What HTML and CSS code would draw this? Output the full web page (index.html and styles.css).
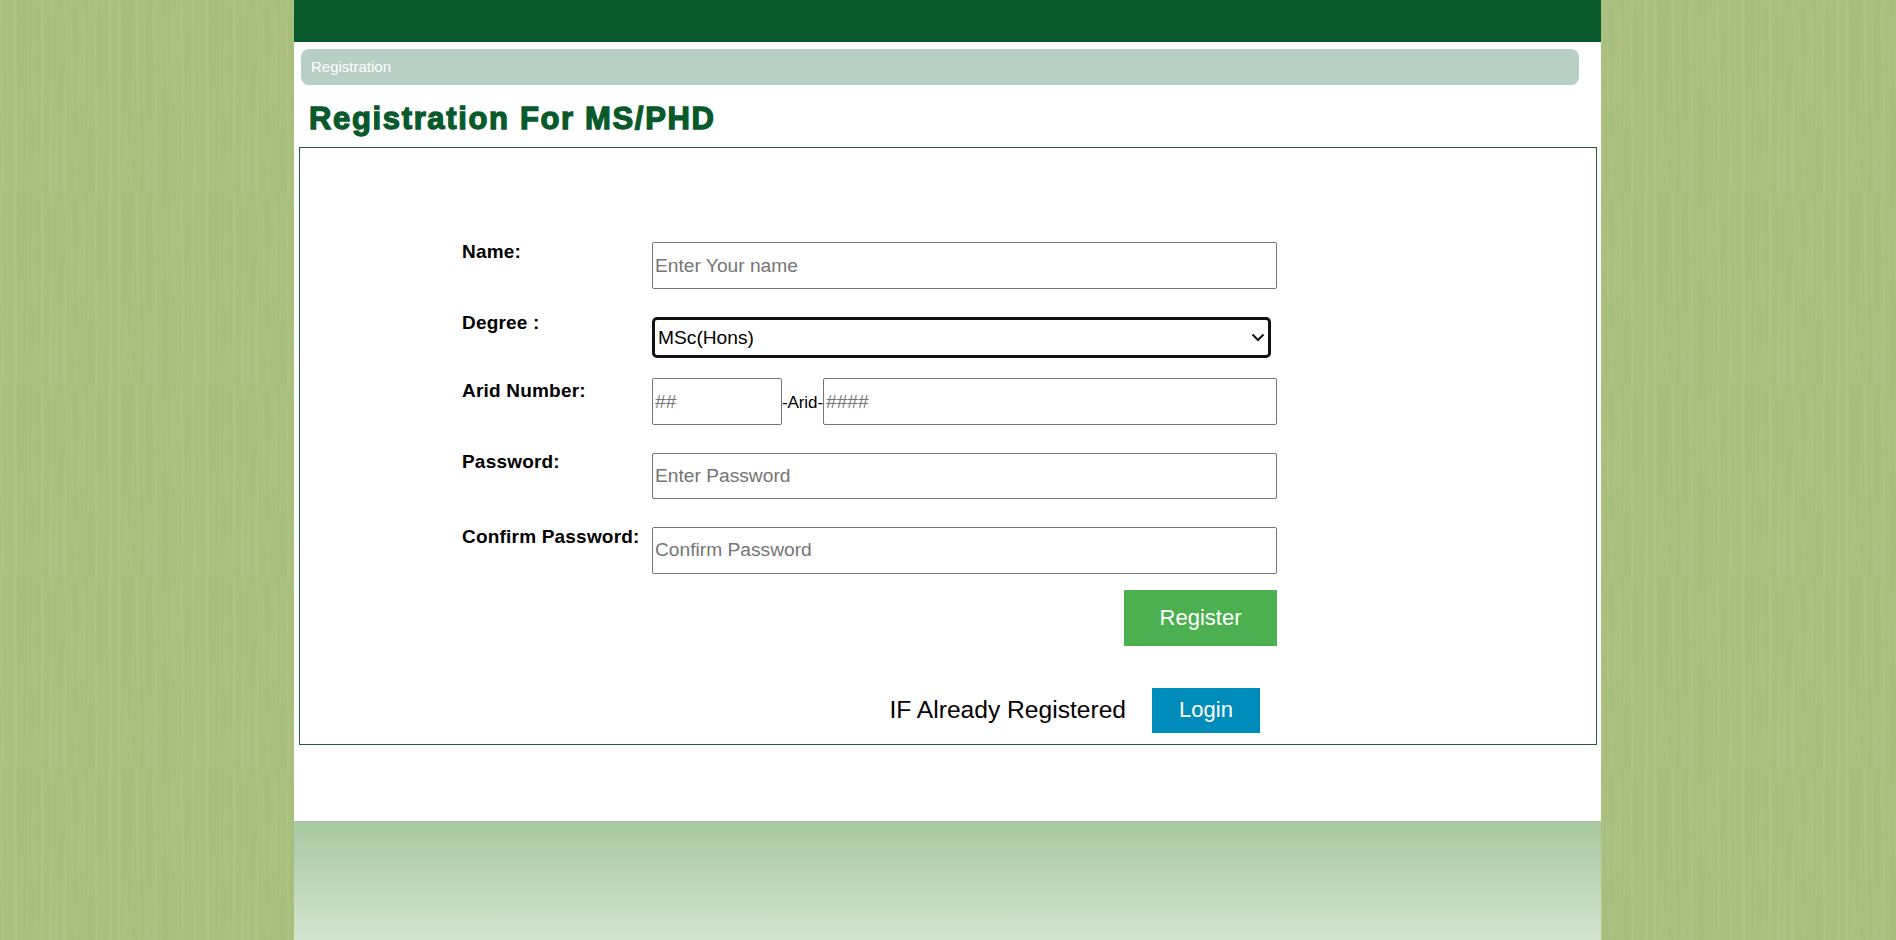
FILE: index.html
```html
<!DOCTYPE html>
<html lang="en">
<head>
<meta charset="utf-8">
<title>Registration For MS/PHD</title>
<link rel="stylesheet" href="styles.css">
</head>
<body>
<div class="page">
  <header class="topbar"></header>
  <nav class="crumb">Registration</nav>
  <h1 class="title">Registration For MS/PHD</h1>
  <main class="panel">
    <form class="form">
      <div class="row row-name">
        <label class="label">Name:</label>
        <input class="field" type="text" placeholder="Enter Your name">
      </div>
      <div class="row row-degree">
        <label class="label">Degree :</label>
        <select class="select"><option>MSc(Hons)</option><option>PhD</option></select>
      </div>
      <div class="row row-arid">
        <label class="label">Arid Number:</label>
        <div class="arid">
          <input class="field field-year" type="text" placeholder="##">
          <span class="arid-sep">-Arid-</span>
          <input class="field field-num" type="text" placeholder="####">
        </div>
      </div>
      <div class="row row-pass">
        <label class="label">Password:</label>
        <input class="field field-short" type="password" placeholder="Enter Password">
      </div>
      <div class="row row-confirm">
        <label class="label">Confirm Password:</label>
        <input class="field field-confirm" type="password" placeholder="Confirm Password">
      </div>
      <div class="actions">
        <button class="btn-register" type="button">Register</button>
      </div>
      <div class="already">
        <span class="already-text">IF Already Registered</span>
        <a class="btn-login">Login</a>
      </div>
    </form>
  </main>
  <footer class="footer"></footer>
</div>
</body>
</html>
```
FILE: styles.css
```css
html, body {
  margin: 0;
  padding: 0;
  height: 100%;
  overflow: hidden;
}
body {
  font-family: "Liberation Sans", Arial, sans-serif;
  background-color: #a8be7c;
  background-image: url("data:image/svg+xml,%3Csvg xmlns='http://www.w3.org/2000/svg' width='192' height='192'%3E%3Cfilter id='f'%3E%3CfeTurbulence type='fractalNoise' baseFrequency='0.22 0.006' numOctaves='3' seed='4' stitchTiles='stitch'/%3E%3CfeColorMatrix values='0 0 0 0 1 0 0 0 0 1 0 0 0 0 0.8 1.4 0 0 0 -0.62'/%3E%3C/filter%3E%3Crect width='192' height='192' filter='url(%23f)' opacity='.2'/%3E%3C/svg%3E");
}
.page {
  width: 1307px;
  height: 940px;
  margin-left: 294px;
  background: #fff;
  display: flex;
  flex-direction: column;
}
.topbar {
  height: 42px;
  background: #08592b;
}
.crumb {
  margin: 7px 22px 0 7px;
  height: 36px;
  padding-left: 10px;
  line-height: 36px;
  border-radius: 8px;
  background: #b8cfc6;
  color: #fff;
  font-size: 15px;
}
.title {
  margin: 18px 0 0 15px;
  height: 32px;
  line-height: 32px;
  font-size: 31px;
  font-weight: 700;
  letter-spacing: 1.65px;
  color: #08592b;
  -webkit-text-stroke: 1.3px #08592b;
}
.panel {
  margin: 12px 0 0 5px;
  width: 1298px;
  height: 598px;
  box-sizing: border-box;
  border: 1px solid #1f6040;
}
.form {
  width: 815px;
  margin-left: 162px;
  padding-top: 94px;
}
.row {
  display: flex;
  align-items: flex-start;
}
.label {
  flex: 0 0 190px;
  font-size: 19px;
  font-weight: 700;
  line-height: 22px;
  color: #000;
  letter-spacing: .2px;
}
.row-name .label { margin-top: -1px; }
.row-degree { margin-top: 28px; }
.row-degree .label { margin-top: -5px; }
.row-arid { margin-top: 20px; }
.row-arid .label { margin-top: 2px; }
.row-pass { margin-top: 28px; }
.row-pass .label { margin-top: -2px; }
.row-confirm { margin-top: 28px; }
.row-confirm .label { margin-top: -1px; }
.field {
  box-sizing: border-box;
  width: 625px;
  height: 47px;
  padding: 0 2px;
  border: 1px solid #767676;
  border-radius: 2px;
  background: #fff;
  font: 19.2px "Liberation Sans", Arial, sans-serif;
  outline: none;
}
.field::placeholder { color: #757575; opacity: 1; }
.field-short { height: 46px; }
.field-confirm { padding-bottom: 2px; }
.select {
  box-sizing: border-box;
  width: 619px;
  height: 41px;
  padding: 0 0 0 3px;
  border: 3px solid #111;
  border-radius: 5px;
  background: #fff url("data:image/svg+xml,%3Csvg xmlns='http://www.w3.org/2000/svg' width='14' height='9' viewBox='0 0 14 9'%3E%3Cpath d='M1.5 1.5 7 7l5.5-5.5' fill='none' stroke='%23111' stroke-width='2'/%3E%3C/svg%3E") no-repeat right 3px center;
  appearance: none;
  color: #000;
  font: 19.2px "Liberation Sans", Arial, sans-serif;
  outline: none;
}
.arid {
  display: flex;
  align-items: center;
  width: 625px;
}
.field-year { width: 130px; }
.field-num { width: 455px; }
.arid-sep {
  flex: 0 0 40px;
  text-align: center;
  font-size: 17px;
  white-space: nowrap;
  letter-spacing: -.1px;
  padding-top: 2px;
}
.actions {
  display: flex;
  justify-content: flex-end;
  margin-top: 16px;
}
.btn-register {
  width: 153px;
  height: 56px;
  border: 0;
  padding: 0;
  background: #4caf50;
  color: #fff;
  font: 22px "Liberation Sans", Arial, sans-serif;
}
.already {
  display: flex;
  justify-content: flex-end;
  align-items: center;
  gap: 26px;
  margin-top: 42px;
  padding-right: 17px;
}
.already-text {
  font-size: 24.6px;
  line-height: 41px;
  padding-bottom: 2px;
  color: #000;
}
.btn-login {
  width: 108px;
  height: 45px;
  line-height: 43px;
  text-align: center;
  background: #008cba;
  color: #fff;
  font-size: 22px;
}
.footer {
  margin-top: auto;
  height: 119px;
  background: linear-gradient(#a7c8a1, #d3e4d0);
}
```
